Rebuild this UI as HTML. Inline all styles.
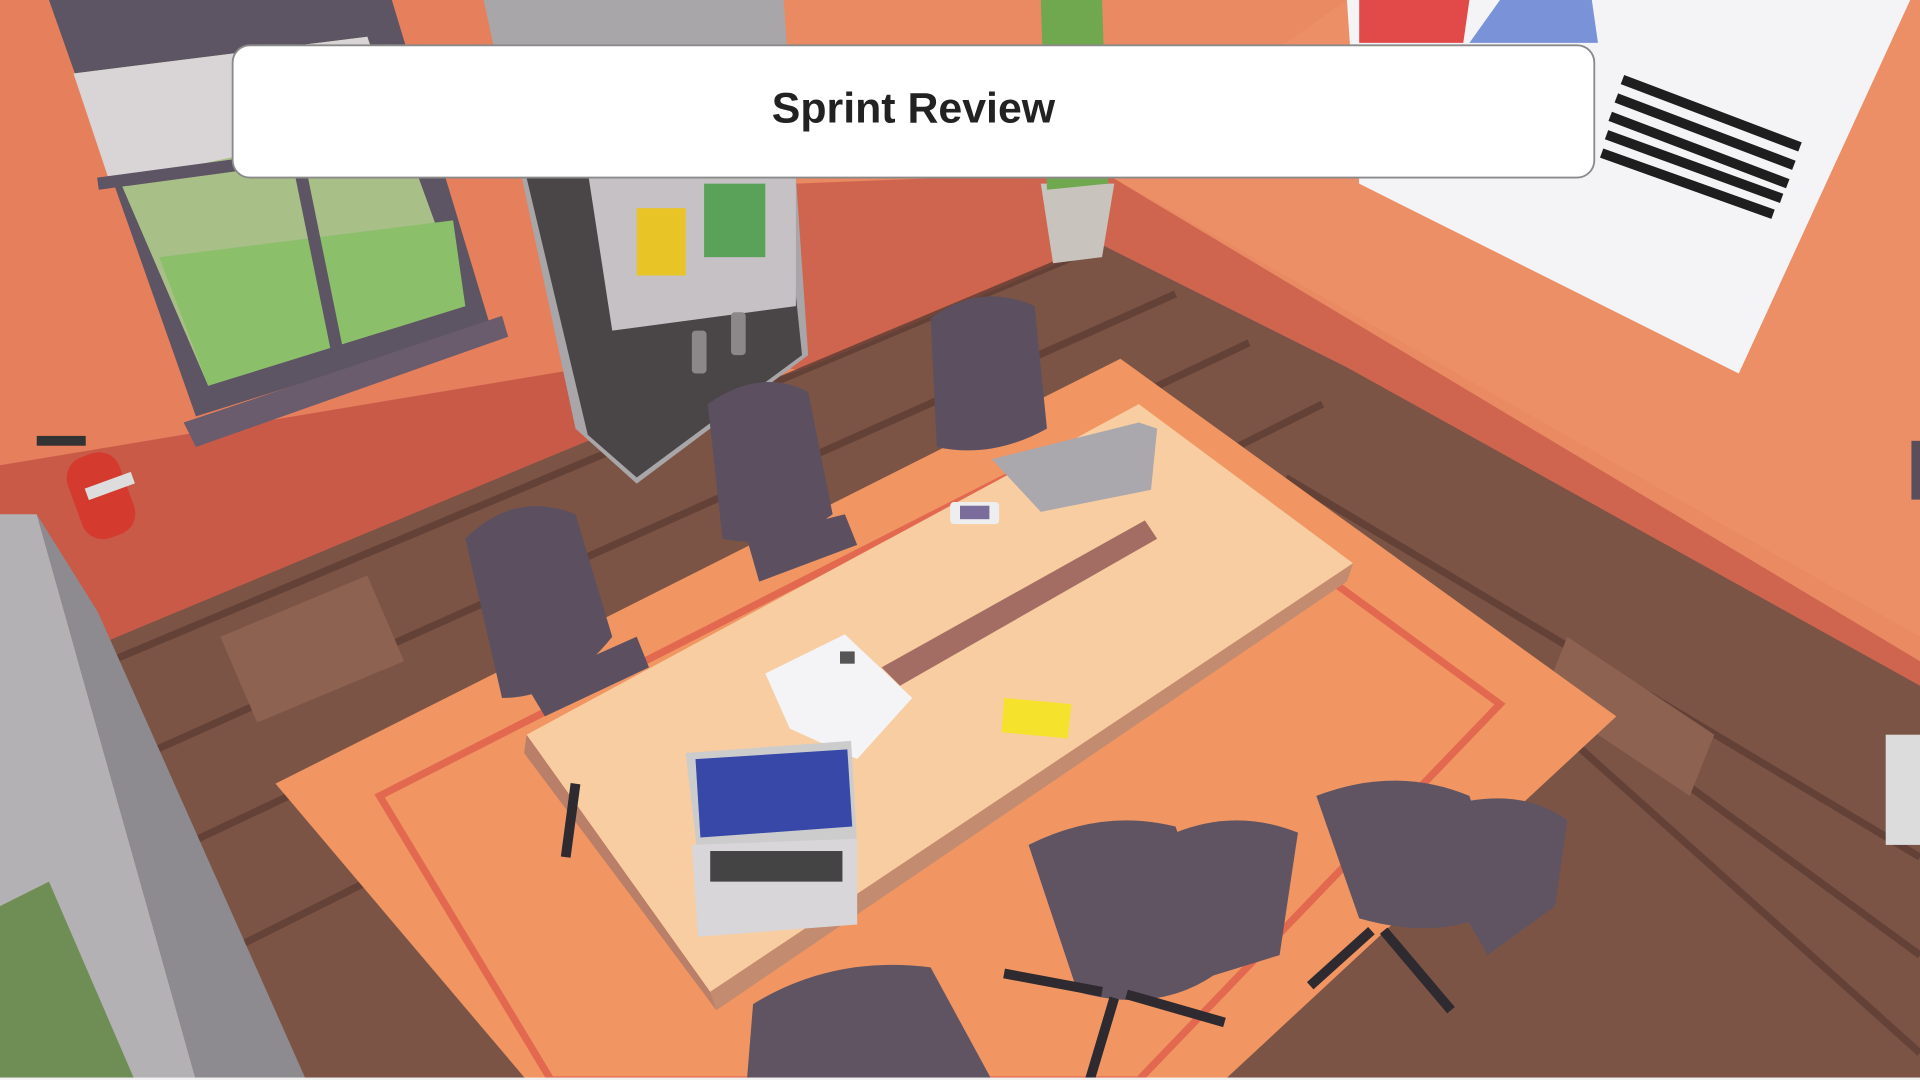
<!DOCTYPE html>
<html><head><meta charset="utf-8">
<style>
html,body{margin:0;padding:0;width:1920px;height:1080px;overflow:hidden;background:#fff}
svg{display:block}
</style></head>
<body>
<svg width="1920" height="1080" viewBox="0 0 1568 882" preserveAspectRatio="none" xmlns="http://www.w3.org/2000/svg">
<!-- back walls -->
<rect x="0" y="0" width="1568" height="882" fill="#e98a62"/>
<polygon points="0,0 420,0 480,360 0,480" fill="#e57f5c"/>
<polygon points="0,380 480,300 480,360 100,520 0,560" fill="#c95a48"/>
<polygon points="650,150 900,140 1568,540 1568,700 1100,380 640,300" fill="#d0654f"/>
<polygon points="900,140 1100,0 1568,0 1568,520" fill="#ec8e66"/>
<!-- floor -->
<polygon points="0,560 480,360 660,300 900,200 1100,300 1568,560 1568,882 0,882" fill="#7c5446"/>
<g stroke="#5f3d34" stroke-width="6" fill="none" opacity="0.8">
<line x1="90" y1="540" x2="900" y2="200"/>
<line x1="110" y1="620" x2="960" y2="240"/>
<line x1="130" y1="700" x2="1020" y2="280"/>
<line x1="160" y1="790" x2="1080" y2="330"/>
<line x1="1050" y1="390" x2="1568" y2="700"/>
<line x1="1130" y1="460" x2="1568" y2="780"/>
<line x1="1200" y1="530" x2="1568" y2="860"/>
</g>
<polygon points="180,520 300,470 330,540 210,590" fill="#8e6251"/>
<polygon points="1280,520 1400,600 1380,650 1260,570" fill="#8e6251"/>
<!-- rug -->
<polygon points="225,640 915,293 1320,585 1000,882 430,882" fill="#f19662"/>
<polygon points="310,650 910,345 1225,575 930,882 450,882" fill="none" stroke="#e2694f" stroke-width="6"/>
<!-- window -->
<polygon points="40,0 320,0 400,265 160,340" fill="#5d5464"/>
<polygon points="60,60 300,30 380,250 170,315" fill="#a9bf88"/>
<polygon points="60,60 300,30 320,100 90,150" fill="#d9d5d6"/>
<polygon points="130,210 370,180 380,250 170,315" fill="#8cbf6a"/>
<line x1="225" y1="40" x2="275" y2="285" stroke="#5d5464" stroke-width="10"/>
<line x1="80" y1="150" x2="340" y2="115" stroke="#5d5464" stroke-width="10"/>
<polygon points="150,345 410,258 415,275 160,365" fill="#6a5c6c"/>
<!-- fire extinguisher -->
<rect x="60" y="370" width="45" height="70" rx="18" fill="#d43a2e" transform="rotate(-20 82 405)"/>
<rect x="72" y="395" width="40" height="10" fill="#ddd" transform="rotate(-20 82 405)"/>
<rect x="30" y="356" width="40" height="8" fill="#333"/>
<!-- bookcase -->
<polygon points="395,0 640,0 660,290 520,395 470,350" fill="#a9a6a9"/>
<polygon points="430,145 640,145 655,290 520,390 480,355" fill="#4a4546"/>
<polygon points="480,140 650,140 650,250 500,270" fill="#c5c1c4"/>
<rect x="520" y="170" width="40" height="55" fill="#e9c427"/>
<rect x="575" y="150" width="50" height="60" fill="#5aa15a"/>
<rect x="565" y="270" width="12" height="35" rx="3" fill="#8b888a"/>
<rect x="597" y="255" width="12" height="35" rx="3" fill="#8b888a"/>
<!-- plant -->
<polygon points="850,150 910,150 900,210 860,215" fill="#c9c3be"/>
<polygon points="850,0 900,0 905,150 855,155" fill="#6fa84f"/>
<!-- poster -->
<polygon points="1100,0 1560,0 1420,305 1110,150" fill="#f4f3f6"/>
<polygon points="1110,0 1200,0 1195,35 1110,35" fill="#e24a4a"/>
<polygon points="1225,0 1300,0 1305,35 1200,35" fill="#7a93d8"/>
<g stroke="#1e1e1e" stroke-width="8">
<line x1="1325" y1="65" x2="1470" y2="120"/>
<line x1="1320" y1="80" x2="1465" y2="135"/>
<line x1="1315" y1="95" x2="1460" y2="150"/>
<line x1="1312" y1="110" x2="1455" y2="162"/>
<line x1="1308" y1="125" x2="1448" y2="175"/>
</g>
<!-- chairs back -->
<g fill="#5c5060">
<path d="M760,260 Q800,230 845,250 L855,350 Q810,375 765,365 Z"/>
<path d="M578,330 Q620,300 660,320 L680,420 Q640,450 590,440 Z"/>
<path d="M380,440 Q420,400 470,420 L500,520 Q460,570 410,570 Z"/>
<path d="M610,440 L690,420 L700,445 L620,475 Z"/>
<path d="M430,560 L520,520 L530,545 L445,585 Z"/>
</g>
<!-- table -->
<polygon points="430,600 930,330 1105,460 580,810" fill="#f7cda1"/>
<polygon points="580,810 1105,460 1100,475 585,825" fill="#c38b70"/>
<polygon points="430,600 580,810 585,825 428,615" fill="#b97f68"/>
<polygon points="720,545 935,425 945,440 735,560" fill="#a46d63"/>
<!-- projector -->
<polygon points="625,550 690,518 745,570 700,620 645,595" fill="#f4f3f6"/>
<rect x="686" y="532" width="12" height="10" fill="#555"/>
<!-- laptops -->
<polygon points="810,375 930,345 945,350 940,400 850,418" fill="#aaa8ad"/>
<polygon points="560,615 695,605 700,690 570,700" fill="#ccc"/>
<polygon points="568,620 692,612 696,675 572,684" fill="#3848a8"/>
<polygon points="565,690 700,685 700,755 570,765" fill="#d8d6d9"/>
<rect x="580" y="695" width="108" height="25" fill="#444"/>
<!-- phone & notepad -->
<rect x="776" y="410" width="40" height="18" rx="3" fill="#eee"/>
<rect x="784" y="413" width="24" height="11" fill="#7a6d9c"/>
<polygon points="820,570 875,575 872,603 818,598" fill="#f5e22c"/>
<!-- front chairs -->
<g fill="#615462">
<path d="M840,690 Q900,660 960,675 L1000,790 Q950,830 880,810 Z"/>
<path d="M960,680 Q1010,660 1060,680 L1045,780 L980,800 Z"/>
<path d="M1075,650 Q1140,625 1200,650 L1230,740 Q1180,770 1110,750 Z"/>
<path d="M1175,660 Q1240,640 1280,670 L1270,740 L1215,780 L1180,720 Z"/>
<path d="M615,820 Q680,780 760,790 L810,882 L610,882 Z"/>
</g>
<g stroke="#2e2a30" stroke-width="8">
<line x1="900" y1="810" x2="820" y2="795"/>
<line x1="910" y1="815" x2="890" y2="882"/>
<line x1="920" y1="812" x2="1000" y2="835"/>
<line x1="1120" y1="760" x2="1070" y2="805"/>
<line x1="1130" y1="760" x2="1185" y2="825"/>
<line x1="470" y1="640" x2="462" y2="700"/>
</g>
<!-- left door/wall -->
<polygon points="0,420 30,420 160,882 0,882" fill="#b4b1b4"/>
<polygon points="30,420 80,500 250,882 160,882" fill="#8e8b90"/>
<polygon points="0,740 40,720 110,882 0,882" fill="#6f8e55"/>
<!-- right edge object -->
<rect x="1540" y="600" width="28" height="90" fill="#dcdcdc"/>
<rect x="1561" y="360" width="7" height="48" fill="#5a4e58"/>
<!-- bottom white strip -->
<rect x="0" y="880" width="1568" height="2" fill="#f2f2f2"/>
<!-- title banner -->
<rect x="190" y="37" width="1112" height="108" rx="14" fill="#ffffff" stroke="#8a8a8a" stroke-width="1.5"/>
<text x="746" y="100" text-anchor="middle" font-family="Liberation Sans, sans-serif" font-weight="bold" font-size="35" fill="#222">Sprint Review</text>
</svg>
</body></html>
